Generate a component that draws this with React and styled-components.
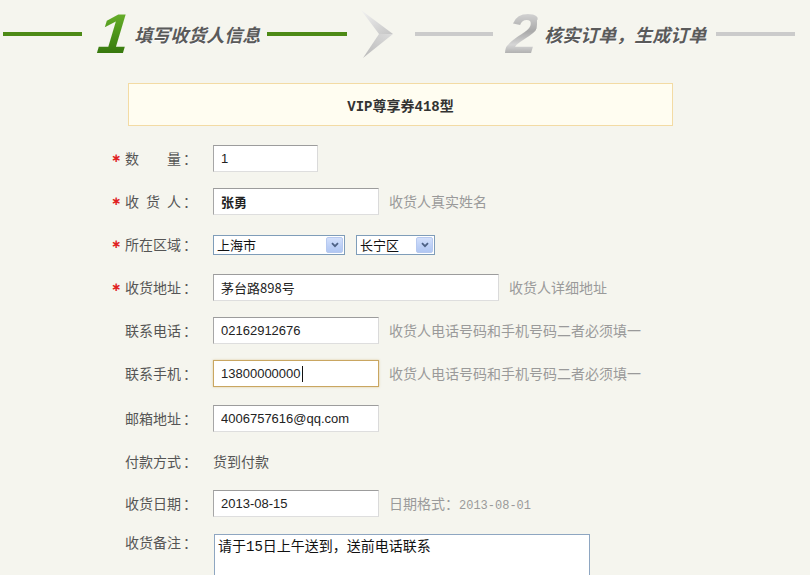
import React from 'react'
import styled, { createGlobalStyle } from 'styled-components'

const GlobalStyle = createGlobalStyle`
  html, body {
    margin: 0;
    padding: 0;
    background: #f5f5ee;
  }
  body {
    font-family: "Noto Sans CJK SC", "Liberation Sans", sans-serif;
    color: #555;
  }
`

const CJK = '"Noto Sans CJK SC", sans-serif'
const LATIN = '"Liberation Sans", "Noto Sans CJK SC", sans-serif'
const MONO = '"Liberation Mono", "Noto Sans CJK SC", monospace'

const Page = styled.div`
  width: 810px;
  height: 575px;
  background: #f5f5ee;
  overflow: hidden;
`

/* ---- step header ---- */

const Steps = styled.div`
  display: flex;
  align-items: center;
  height: 68px;
  padding-left: 3px;
`

const StepLine = styled.div`
  width: ${props => props.$width}px;
  height: 4px;
  margin-left: ${props => props.$gap || 0}px;
  background: ${props => (props.$active ? '#4d8a16' : '#cbcbcb')};
  flex-shrink: 0;
`

const StepNum = styled.span`
  margin-left: ${props => props.$gap}px;
  font-family: "Liberation Sans", sans-serif;
  font-weight: bold;
  font-style: italic;
  font-size: 56px;
  line-height: 54px;
  letter-spacing: -2px;
  background: ${props =>
    props.$active
      ? 'linear-gradient(180deg, #6fb630 0%, #4c9419 50%, #2f6d0a 100%)'
      : 'linear-gradient(180deg, #e2e2e2 0%, #a9a9a9 45%, #d6d6d6 70%, #8d8d8d 100%)'};
  -webkit-background-clip: text;
  background-clip: text;
  color: transparent;
  transform: skewX(-6deg);
`

const StepText = styled.span`
  margin-left: ${props => props.$gap}px;
  margin-right: ${props => props.$right}px;
  font-family: ${CJK};
  font-size: 18px;
  font-weight: bold;
  font-style: italic;
  color: #5a5a5a;
  white-space: nowrap;
  line-height: 1;
  text-shadow: 0 1px 0 #fff;
`

const ArrowWrap = styled.div`
  margin-left: 12px;
  width: 36px;
  height: 50px;
  flex-shrink: 0;
`

const StepArrow = () => (
  <ArrowWrap>
    <svg width="36" height="50" viewBox="0 0 36 50">
      <defs>
        <linearGradient id="arrTop" x1="0" y1="0" x2="1" y2="1">
          <stop offset="0" stopColor="#f2f2f2" />
          <stop offset="1" stopColor="#c4c4c4" />
        </linearGradient>
        <linearGradient id="arrBot" x1="0" y1="1" x2="1" y2="0">
          <stop offset="0" stopColor="#b9b9b9" />
          <stop offset="1" stopColor="#dcdcdc" />
        </linearGradient>
      </defs>
      <polygon points="2,1 34,25 20,25" fill="url(#arrTop)" />
      <polygon points="34,25 4,49 20,25" fill="url(#arrBot)" />
    </svg>
  </ArrowWrap>
)

/* ---- product title ---- */

const ProductBox = styled.div`
  box-sizing: border-box;
  width: 545px;
  height: 43px;
  margin: 15px 0 0 128px;
  border: 1px solid #f3dba4;
  background: #fffdf1;
  display: flex;
  align-items: center;
  justify-content: center;
  font-family: ${MONO};
  font-size: 14px;
  font-weight: bold;
  color: #333;
`

/* ---- form ---- */

const Form = styled.div`
  margin-top: 11px;
  padding-left: 108px;
`

const Row = styled.div`
  display: grid;
  grid-template-columns: 105px auto;
  align-items: ${props => (props.$top ? 'start' : 'center')};
  height: ${props => props.$height || 43}px;
  margin-top: ${props => props.$mt || 0}px;
`

const LabelCell = styled.div`
  display: flex;
  align-items: center;
  font-size: 14px;
  color: #555;
  margin-top: -2px;
`

const Star = styled.span`
  width: 14px;
  padding-left: 3px;
  color: #e02020;
  font-family: "DejaVu Sans", sans-serif;
  font-size: 12px;
  font-weight: bold;
  line-height: 1;
`

const LabelText = styled.span`
  display: inline-block;
  width: 56px;
  text-align: justify;
  text-align-last: justify;
  white-space: nowrap;
  overflow: hidden;
`

const Colon = styled.span`
  width: 14px;
  padding-left: 2px;
`

const Field = styled.div`
  display: flex;
  align-items: center;
  gap: ${props => props.$gap || 10}px;
`

const TextInput = styled.input`
  box-sizing: border-box;
  width: ${props => props.$width}px;
  height: 27px;
  margin: 0;
  padding: 0 7px;
  background: #fff;
  border: 1px solid;
  border-color: #9c9c9c #dadada #dedede #a6a6a6;
  font-family: ${props => (props.$cjk ? CJK : LATIN)};
  font-size: 13px;
  font-weight: ${props => (props.$bold ? 'bold' : 'normal')};
  color: #222;
  outline: none;
`

const FocusBox = styled.div`
  box-sizing: border-box;
  width: ${props => props.$width}px;
  height: 27px;
  padding: 0 7px;
  display: flex;
  align-items: center;
  background: #fff;
  border: 1px solid #c9a661;
  box-shadow: 0 0 2px rgba(201, 166, 97, 0.6);
  font-family: ${LATIN};
  font-size: 13px;
  color: #222;
  &::after {
    content: '';
    width: 1px;
    height: 16px;
    margin-left: 1px;
    background: #111;
  }
`

const Hint = styled.span`
  font-size: 14px;
  color: #9a9a9a;
  white-space: nowrap;
  margin-top: -2px;
`

const HintMono = styled.span`
  font-family: ${MONO};
  font-size: 12px;
`

const PlainValue = styled.span`
  font-size: 14px;
  color: #555;
  margin-top: -2px;
`

const SelectBox = styled.div`
  box-sizing: border-box;
  width: ${props => props.$width}px;
  height: 20px;
  padding-left: 3px;
  display: flex;
  align-items: center;
  justify-content: space-between;
  background: #fff;
  border: 1px solid #7f9db9;
  font-size: 13px;
  color: #111;
`

const SelectBtn = styled.span`
  box-sizing: border-box;
  width: 17px;
  height: 16px;
  margin-right: 1px;
  display: flex;
  align-items: center;
  justify-content: center;
  background: linear-gradient(180deg, #d3e0fb 0%, #bccff6 60%, #b1c7f3 100%);
  border: 1px solid #b7c9ef;
  border-radius: 2px;
`

const Select = ({ width, value }) => (
  <SelectBox $width={width}>
    <span>{value}</span>
    <SelectBtn>
      <svg width="8" height="6" viewBox="0 0 8 6">
        <path d="M1 1.2 L4 4.2 L7 1.2" fill="none" stroke="#4d6185" strokeWidth="1.8" />
      </svg>
    </SelectBtn>
  </SelectBox>
)

const Memo = styled.textarea`
  box-sizing: border-box;
  width: 376px;
  height: 70px;
  margin: 0 0 0 1px;
  padding: 3px 3px;
  resize: none;
  background: #fff;
  border: 1px solid #8ea6c1;
  font-family: ${MONO};
  font-size: 14px;
  line-height: 18px;
  color: #111;
  outline: none;
`

const Label = ({ required, text }) => (
  <LabelCell>
    <Star>{required ? '∗' : ''}</Star>
    <LabelText>{text}</LabelText>
    <Colon>：</Colon>
  </LabelCell>
)

export default function App() {
  return (
    <Page>
      <GlobalStyle />
      <Steps>
        <StepLine $width={79} $active />
        <StepNum $gap={16} $active>1</StepNum>
        <StepText $gap={7} $right={7}>填写收货人信息</StepText>
        <StepLine $width={80} $active />
        <StepArrow />
        <StepLine $width={78} $gap={20} />
        <StepNum $gap={14}>2</StepNum>
        <StepText $gap={8} $right={10}>核实订单，生成订单</StepText>
        <StepLine $width={79} />
      </Steps>

      <ProductBox>VIP尊享券418型</ProductBox>

      <Form>
        <Row>
          <Label required text="数 量" />
          <Field>
            <TextInput $width={105} readOnly value="1" />
          </Field>
        </Row>
        <Row>
          <Label required text="收 货 人" />
          <Field>
            <TextInput $width={166} $cjk $bold readOnly value="张勇" />
            <Hint>收货人真实姓名</Hint>
          </Field>
        </Row>
        <Row>
          <Label required text="所在区域" />
          <Field $gap={11}>
            <Select width={132} value="上海市" />
            <Select width={79} value="长宁区" />
          </Field>
        </Row>
        <Row>
          <Label required text="收货地址" />
          <Field>
            <TextInput $width={286} $cjk readOnly value="茅台路898号" />
            <Hint>收货人详细地址</Hint>
          </Field>
        </Row>
        <Row>
          <Label text="联系电话" />
          <Field>
            <TextInput $width={166} readOnly value="02162912676" />
            <Hint>收货人电话号码和手机号码二者必须填一</Hint>
          </Field>
        </Row>
        <Row>
          <Label text="联系手机" />
          <Field>
            <FocusBox $width={166}>13800000000</FocusBox>
            <Hint>收货人电话号码和手机号码二者必须填一</Hint>
          </Field>
        </Row>
        <Row $mt={2}>
          <Label text="邮箱地址" />
          <Field>
            <TextInput $width={166} readOnly value="4006757616@qq.com" />
          </Field>
        </Row>
        <Row>
          <Label text="付款方式" />
          <Field>
            <PlainValue>货到付款</PlainValue>
          </Field>
        </Row>
        <Row $height={41}>
          <Label text="收货日期" />
          <Field>
            <TextInput $width={166} readOnly value="2013-08-15" />
            <Hint>
              日期格式：<HintMono>2013-08-01</HintMono>
            </Hint>
          </Field>
        </Row>
        <Row $top $height={80} $mt={10}>
          <Label text="收货备注" />
          <Field>
            <Memo readOnly value="请于15日上午送到，送前电话联系" />
          </Field>
        </Row>
      </Form>
    </Page>
  )
}
